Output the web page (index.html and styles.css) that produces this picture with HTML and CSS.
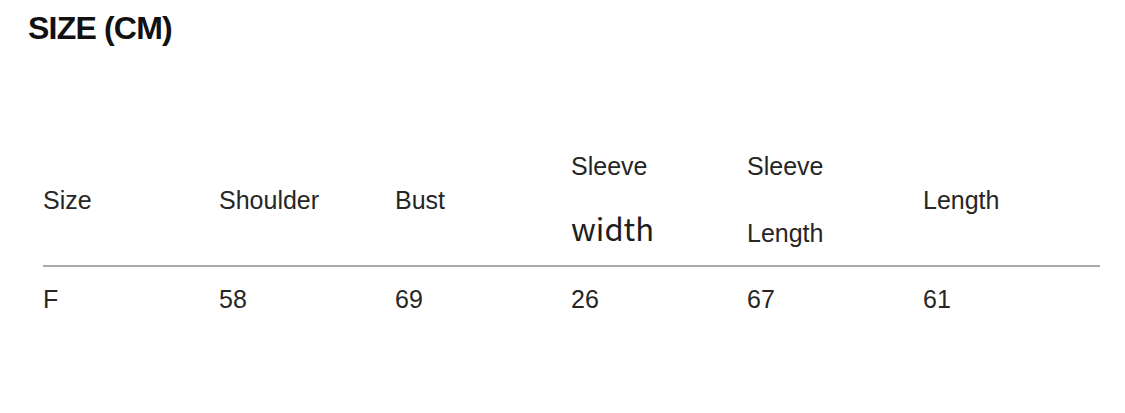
FILE: index.html
```html
<!DOCTYPE html>
<html lang="en">
<head>
<meta charset="utf-8">
<title>Size (CM)</title>
<link rel="stylesheet" href="styles.css">
</head>
<body>
<div class="page">
  <h1 class="title">SIZE (CM)</h1>
  <table class="size-table">
    <thead>
      <tr>
        <th><span class="ln">Size</span></th>
        <th><span class="ln">Shoulder</span></th>
        <th><span class="ln">Bust</span></th>
        <th><span class="ln">Sleeve</span><span class="ln second alt">width</span></th>
        <th><span class="ln">Sleeve</span><span class="ln second">Length</span></th>
        <th><span class="ln">Length</span></th>
      </tr>
    </thead>
    <tbody>
      <tr>
        <td>F</td>
        <td>58</td>
        <td>69</td>
        <td>26</td>
        <td>67</td>
        <td>61</td>
      </tr>
    </tbody>
  </table>
</div>
</body>
</html>
```
FILE: styles.css
```css
html, body {
  margin: 0;
  padding: 0;
  background: #ffffff;
}

.page {
  width: 1125px;
  height: 413px;
  padding: 12px 0 0 0;
  box-sizing: border-box;
  font-family: "Liberation Sans", Arial, sans-serif;
  color: #222222;
}

.title {
  margin: 0 0 0 28px;
  font-size: 32px;
  line-height: 32px;
  font-weight: 700;
  color: #111111;
  letter-spacing: -0.8px;
}

.size-table {
  margin: 108px 0 0 43px;
  width: 1057px;
  table-layout: fixed;
  border-collapse: collapse;
}

.size-table th,
.size-table td {
  padding: 0;
  text-align: left;
  font-size: 25px;
  font-weight: 400;
  color: #262626;
  width: 176px;
}

.size-table th {
  vertical-align: middle;
  padding-bottom: 18px;
  border-bottom: 2px solid #a9a9a9;
}

.size-table th:last-child {
  width: 177px;
}

.ln {
  display: block;
  line-height: 28px;
}

.ln.second {
  margin-top: 39px;
}

.ln.alt {
  font-family: "Noto Sans CJK SC", "Noto Sans", sans-serif;
  font-size: 31px;
  color: #1e1e1e;
  margin-top: 34px;
  margin-bottom: 5px;
}

.size-table td {
  padding-top: 18px;
  line-height: 28px;
}
```
